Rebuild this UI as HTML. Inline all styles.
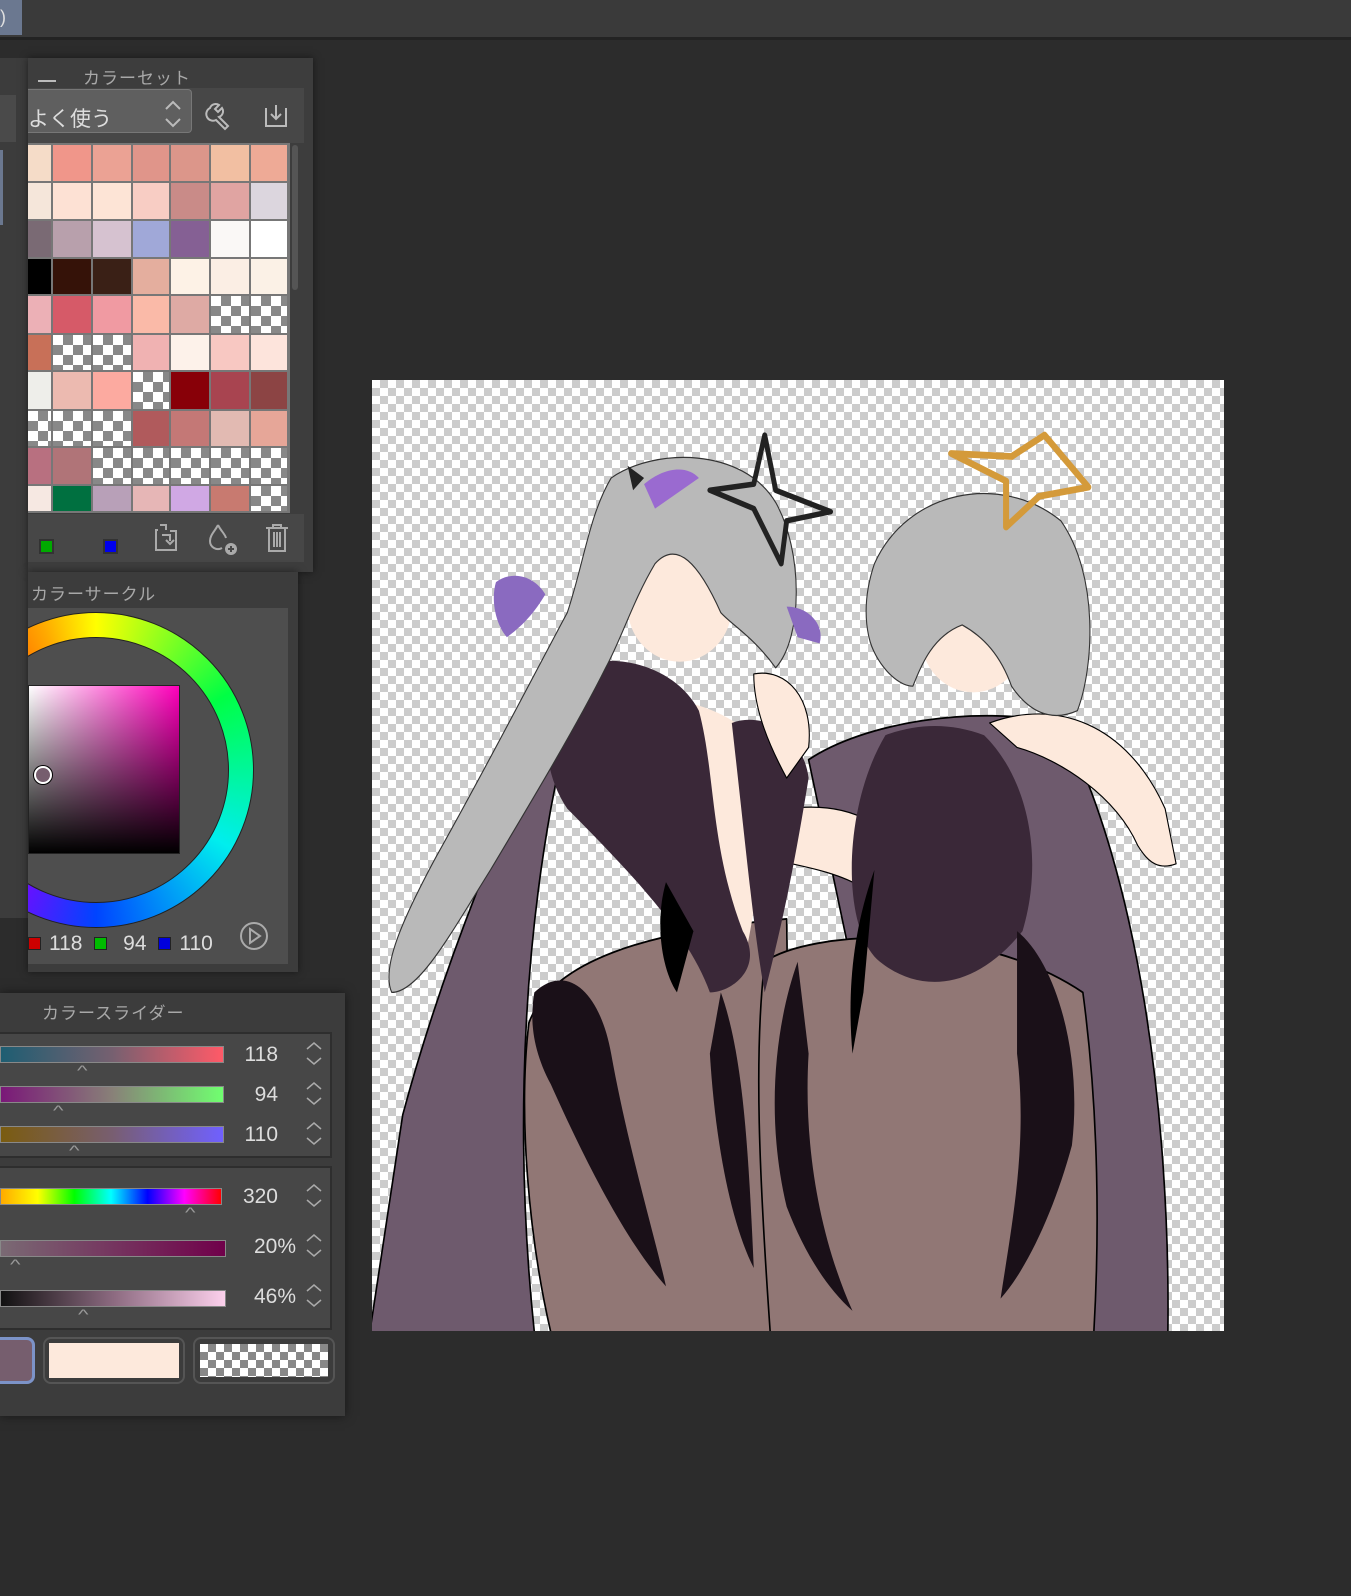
<!DOCTYPE html>
<html><head><meta charset="utf-8"><style>
*{margin:0;padding:0;box-sizing:border-box}
body{width:1351px;height:1596px;background:#2c2c2c;position:relative;overflow:hidden;font-family:"Liberation Sans","Noto Sans CJK JP",sans-serif;color:#cfcfcf}
.a{position:absolute}
.chk{background-color:#fff;background-image:linear-gradient(45deg,#888 25%,transparent 25%,transparent 75%,#888 75%),linear-gradient(45deg,#888 25%,transparent 25%,transparent 75%,#888 75%);background-size:16px 16px;background-position:0 0,8px 8px}
.cv{background-color:#fff;background-image:linear-gradient(45deg,#ccc 25%,transparent 25%,transparent 75%,#ccc 75%),linear-gradient(45deg,#ccc 25%,transparent 25%,transparent 75%,#ccc 75%);background-size:16px 16px;background-position:0 0,8px 8px}
.ttl{font-size:17px;color:#a8a8a8;letter-spacing:1px}
.bar{position:absolute;left:0;width:224px;height:17px;border:1px solid #888}
.num{position:absolute;width:60px;text-align:right;font-size:21px;color:#ddd}
.car{position:absolute;font-size:14px;color:#999;transform:scaleX(1.6)}
</style></head><body>
<div class="a" style="left:0;top:0;width:1351px;height:37px;background:#3a3a3a"></div>
<div class="a" style="left:0;top:0;width:22px;height:35px;background:#6b7890;color:#e0e0e0;font-size:18px;line-height:35px">)</div>
<div class="a" style="left:0;top:37px;width:1351px;height:3px;background:#232323"></div>

<div class="a" style="left:0;top:58px;width:30px;height:860px;background:#3c3c3c"></div>
<div class="a" style="left:0;top:95px;width:16px;height:47px;background:#4a4a4a"></div>
<div class="a" style="left:0;top:150px;width:3px;height:75px;background:#6b7890"></div>

<div class="a" style="left:28px;top:58px;width:285px;height:514px;background:#3d3d3d;box-shadow:0 0 8px rgba(0,0,0,.5)"></div>
<div class="a" style="left:38px;top:80px;width:18px;height:2px;background:#bbb"></div>
<div class="a ttl" style="left:83px;top:64px">カラーセット</div>
<div class="a" style="left:28px;top:88px;width:276px;height:55px;background:#474747"></div>
<div class="a" style="left:28px;top:89px;width:164px;height:44px;background:#5f5f5f;border:1px solid #777;border-left:none;border-radius:0 4px 4px 0"></div>
<div class="a" style="left:28px;top:103px;font-size:21px;color:#ddd">よく使う</div>
<svg class="a" style="left:163px;top:97px" width="20" height="34"><path d="M3 12L10 5L17 12M3 22L10 29L17 22" stroke="#bbb" stroke-width="2" fill="none"/></svg>
<svg class="a" style="left:204px;top:100px" width="32" height="32"><path d="M6 8a6 6 0 0 1 9-3l-4 4 3 3 4-4a6 6 0 0 1-3 9l9 9-3 3-9-9a6 6 0 0 1-6-12z" stroke="#bbb" stroke-width="2" fill="none"/></svg>
<svg class="a" style="left:262px;top:102px" width="28" height="28"><path d="M4 6v18h20V6M14 3v14M9 12l5 5 5-5" stroke="#bbb" stroke-width="2" fill="none"/></svg>
<div class="a" style="left:28px;top:143px;width:262px;height:370px;background:#777"></div>
<div id="grid" class="a" style="left:28px;top:145px;width:262px;height:368px"></div>
<div class="a" style="left:292px;top:145px;width:6px;height:145px;background:#555;border-radius:3px"></div>
<div class="a" style="left:28px;top:514px;width:276px;height:48px;background:#474747"></div>
<div class="a" style="left:39px;top:539px;width:15px;height:15px;background:#0a0;border:2px solid #333"></div>
<div class="a" style="left:103px;top:539px;width:15px;height:15px;background:#00e;border:2px solid #333"></div>
<svg class="a" style="left:152px;top:522px" width="30" height="32"><path d="M8 3h6v5M6 8h-2v20h20V9h-6M10 13l8-0v6M14 18l4 4 4-4" stroke="#aaa" stroke-width="2" fill="none"/></svg>
<svg class="a" style="left:205px;top:522px" width="36" height="36"><path d="M13 3C10 9 5 13 5 19a8 8 0 0 0 12 7M13 3c3 6 7 9 8 13" stroke="#aaa" stroke-width="2" fill="none"/><circle cx="26" cy="27" r="6" fill="#aaa"/><path d="M23 27h6M26 24v6" stroke="#474747" stroke-width="2"/></svg>
<svg class="a" style="left:264px;top:523px" width="26" height="30"><path d="M2 5h22M9 5V2h8v3M5 5v23h16V5M10 9v15M13 9v15M16 9v15" stroke="#aaa" stroke-width="2" fill="none"/></svg>

<div class="a" style="left:28px;top:572px;width:270px;height:400px;background:#3c3c3c;box-shadow:0 0 8px rgba(0,0,0,.5)"></div>
<div class="a ttl" style="left:31px;top:580px">カラーサークル</div>
<div class="a" style="left:28px;top:608px;width:260px;height:356px;background:#4e4e4e;overflow:hidden">
<div class="a" style="left:-90px;top:4px;width:316px;height:316px;border-radius:50%;background:conic-gradient(#ff0 0deg,#0f4 60deg,#0ee 120deg,#04f 180deg,#80f 220deg,#f0a 270deg,#f40 310deg,#fa0 340deg,#ff0 360deg);border:1px solid #222"></div>
<div class="a" style="left:-65px;top:29px;width:266px;height:266px;border-radius:50%;background:#4e4e4e;border:1px solid #222"></div>
<div class="a" style="left:0;top:77px;width:152px;height:169px;background:linear-gradient(to bottom,transparent,#000),linear-gradient(to right,#fff,#f0b);border:1px solid #222"></div>
<div class="a" style="left:6px;top:158px;width:18px;height:18px;border-radius:50%;border:2px solid #fff;background:#765e6e;box-shadow:0 0 0 1px #000"></div>
<div class="a" style="left:0;top:324px;width:260px;font-size:21px;color:#ddd;white-space:nowrap"><span style="display:inline-block;width:13px;height:13px;background:#c00;border:1px solid #222;margin:0 8px 0 0"></span>118 <span style="display:inline-block;width:13px;height:13px;background:#0b0;border:1px solid #222;margin:0 10px 0 6px"></span>&nbsp;94 <span style="display:inline-block;width:13px;height:13px;background:#00d;border:1px solid #222;margin:0 8px 0 6px"></span>110</div>
<svg class="a" style="left:210px;top:312px" width="32" height="32"><circle cx="16" cy="16" r="13" stroke="#aaa" stroke-width="2" fill="none"/><path d="M12 9l10 7-10 7z" stroke="#aaa" stroke-width="2" fill="none"/></svg>
</div>

<div class="a" style="left:0;top:993px;width:345px;height:423px;background:#3c3c3c;box-shadow:0 0 10px rgba(0,0,0,.5)"></div>
<div class="a ttl" style="left:42px;top:999px">カラースライダー</div>
<div class="a" style="left:0;top:1032px;width:332px;height:126px;background:#474747;border:2px solid #2e2e2e;border-left:none"></div>
<div class="a" style="left:0;top:1166px;width:332px;height:164px;background:#474747;border:2px solid #2e2e2e;border-left:none"></div>
<div class="bar" style="top:1046px;background:linear-gradient(90deg,#1e5e72,#766070,#ff5a68)"></div>
<div class="bar" style="top:1086px;background:linear-gradient(90deg,#7a1878,#888078,#70ff70)"></div>
<div class="bar" style="top:1126px;background:linear-gradient(90deg,#7a5c10,#785e70,#7060ff)"></div>
<div class="bar" style="top:1188px;width:222px;background:linear-gradient(90deg,#fa0,#ff0,#0f0,#0ff,#00f,#f0f,#f00)"></div>
<div class="bar" style="top:1240px;width:226px;background:linear-gradient(90deg,#7a6a74,#70004a)"></div>
<div class="bar" style="top:1290px;width:226px;background:linear-gradient(90deg,#111,#8c6a80,#fcd0ec)"></div>
<div class="car" style="left:79px;top:1062px">^</div>
<div class="car" style="left:55px;top:1102px">^</div>
<div class="car" style="left:71px;top:1142px">^</div>
<div class="car" style="left:187px;top:1204px">^</div>
<div class="car" style="left:12px;top:1256px">^</div>
<div class="car" style="left:80px;top:1306px">^</div>
<div class="num" style="left:218px;top:1043px">118</div>
<div class="num" style="left:218px;top:1083px">94</div>
<div class="num" style="left:218px;top:1123px">110</div>
<div class="num" style="left:218px;top:1185px">320</div>
<div class="num" style="left:236px;top:1235px">20%</div>
<div class="num" style="left:236px;top:1285px">46%</div>
<svg class="a" style="left:305px;top:1040px" width="18" height="290"><g stroke="#aaa" stroke-width="1.5" fill="none"><path d="M2 9l7-6 7 6M2 18l7 6 7-6"/><path d="M2 49l7-6 7 6M2 58l7 6 7-6"/><path d="M2 89l7-6 7 6M2 98l7 6 7-6"/><path d="M2 151l7-6 7 6M2 160l7 6 7-6"/><path d="M2 201l7-6 7 6M2 210l7 6 7-6"/><path d="M2 251l7-6 7 6M2 260l7 6 7-6"/></g></svg>
<div class="a" style="left:0;top:1337px;width:35px;height:47px;border:3px solid #7c93c8;border-left:none;border-radius:0 8px 8px 0;background:#765e6e"></div>
<div class="a" style="left:43px;top:1337px;width:142px;height:47px;border:2px solid #555;border-radius:8px;padding:4px"><div style="width:100%;height:100%;background:#fde9dc"></div></div>
<div class="a" style="left:193px;top:1337px;width:142px;height:47px;border:2px solid #555;border-radius:8px;padding:5px"><div class="chk" style="width:100%;height:100%"></div></div>

<div class="a cv" style="left:372px;top:380px;width:852px;height:951px;overflow:hidden">
<svg width="852" height="951" viewBox="0 0 852 951">
<g transform="scale(0.5485 0.6124) translate(-4 0)" stroke-linejoin="round">
<path d="M380 470 C300 600 150 900 60 1200 L0 1555 L300 1555 C270 1300 270 1000 330 700 Z" fill="#6e5a6d" stroke="#000" stroke-width="3"/>
<path d="M800 620 C900 560 1100 530 1260 560 C1400 800 1460 1200 1455 1555 L1020 1555 Z" fill="#6e5a6d" stroke="#000" stroke-width="3"/>
<path d="M290 1050 C330 950 500 900 760 880 L770 1555 L330 1555 C290 1400 270 1200 290 1050Z" fill="#917775" stroke="#000" stroke-width="3"/>
<path d="M720 950 C800 900 1100 880 1300 1000 C1330 1200 1330 1400 1320 1555 L730 1555 C710 1300 700 1100 720 950Z" fill="#917775" stroke="#000" stroke-width="3"/>
<path d="M520 520 C600 520 700 560 730 620 C720 760 700 880 680 960 C640 950 610 900 600 880 C580 760 540 640 520 520Z" fill="#fde9dc"/>
<path d="M980 580 C1050 570 1110 580 1140 620 C1110 760 1080 900 1000 960 C960 880 950 700 980 580Z" fill="#fde9dc"/>
<path d="M700 720 C760 690 850 690 910 720 L900 830 C850 800 760 790 720 780 Z" fill="#fde9dc" stroke="#000" stroke-width="2"/>
<path d="M370 470 C450 440 560 470 600 540 C630 640 620 760 680 900 C720 960 660 1000 620 1000 C580 900 470 800 360 700 C300 620 320 520 370 470Z" fill="#3a2838"/>
<path d="M660 560 C720 540 790 580 800 650 C780 760 760 860 720 1000 C700 900 690 800 660 560Z" fill="#3a2838"/>
<path d="M300 1000 C360 950 420 1000 440 1100 C470 1250 520 1400 540 1480 C460 1400 380 1250 330 1150 C300 1100 290 1050 300 1000Z" fill="#1a1018"/>
<path d="M640 1000 C680 1100 690 1250 700 1450 C660 1380 630 1250 620 1100Z" fill="#1a1018"/>
<path d="M940 580 C1000 560 1060 560 1120 580 C1200 650 1230 780 1190 900 C1100 1000 1000 1000 930 950 C860 900 860 700 940 580Z" fill="#3a2838"/>
<path d="M1180 900 C1250 950 1300 1100 1280 1250 C1250 1350 1200 1450 1150 1500 C1170 1380 1200 1250 1180 1100Z" fill="#1a1018"/>
<path d="M780 950 C740 1050 720 1200 760 1350 C790 1420 830 1480 880 1520 C820 1400 790 1250 800 1100 Z" fill="#1a1018"/>
<path d="M920 800 C880 900 870 1000 880 1100 L900 1000Z" fill="#000"/>
<path d="M540 820 C520 880 530 960 560 1000 L590 900Z" fill="#000"/>
<ellipse cx="565" cy="370" rx="95" ry="90" fill="#fde9dc"/>
<ellipse cx="1100" cy="420" rx="95" ry="90" fill="#fde9dc"/>
<path d="M700 480 C760 470 810 520 800 600 L760 650 C730 600 700 540 700 480Z" fill="#fde9dc" stroke="#000" stroke-width="2"/>
<path d="M1130 560 C1250 520 1380 560 1450 700 L1470 790 C1440 800 1420 790 1400 760 C1360 680 1260 620 1180 600Z" fill="#fde9dc" stroke="#000" stroke-width="2"/>
<path d="M440 160 C520 110 680 110 740 200 C790 280 790 420 740 470 C700 420 660 400 640 380 C600 300 560 260 520 300 C480 360 460 420 430 470 C380 560 300 680 220 800 C150 900 90 1000 40 1000 C20 960 60 880 120 780 C220 620 300 480 360 380 C390 300 400 220 440 160Z" fill="#b9b9b9" stroke="#333" stroke-width="2"/>
<path d="M230 330 C260 310 300 320 320 350 C300 380 280 400 250 420 C230 400 220 360 230 330Z" fill="#8a6ac0"/>
<path d="M760 370 C800 370 830 400 820 430 L780 420Z" fill="#8a6ac0"/>
<path d="M500 170 C540 140 580 140 600 160 L520 210Z" fill="#9a6ad0"/>
<path d="M470 140 L500 160 L480 180 Z" fill="#222"/>
<path d="M720 90 L740 180 L840 215 L760 230 L750 300 L700 210 L620 180 L700 170 Z" fill="none" stroke="#222" stroke-width="9"/>
<path d="M920 300 C980 180 1150 150 1260 230 C1330 320 1320 470 1290 540 C1240 560 1200 540 1170 500 C1150 450 1120 420 1080 400 C1020 420 1000 480 990 500 C960 500 920 460 910 420 C900 380 905 340 920 300Z" fill="#b9b9b9" stroke="#333" stroke-width="2"/>
<path d="M1060 120 L1170 125 L1230 90 L1310 175 L1220 190 L1160 240 L1160 165 Z" fill="none" stroke="#d49a3a" stroke-width="11"/>
</g>
</svg>
</div>
<script>
var rows=[
["#f5dcc8","#f0968a","#eba294","#e0958a","#dc968a","#f2bfa2","#eeaa96"],
["#f5e6da","#fde1d4","#fde4d6","#f8cdc4","#c98b88","#e0a4a2","#dcd6de"],
["#7a6a74","#b8a0ac","#d6c2d0","#a0a8d8","#856094","#faf8f6","#ffffff"],
["#000000","#351208","#3a2016","#e4ae9e","#fdf2e6","#fbeee4","#fbf1e6"],
["#ecb0b6","#d65a68","#f09aa2","#fabaa8","#deaaa4","c","c"],
["#c87058","c","c","#f0b2b2","#fdf2ea","#f8c8c2","#fde4dc"],
["#eeeeea","#ecbab0","#fcaaa0","c","#880008","#a84450","#8c4444"],
["c","c","c","#b05a5c","#c47876","#e2bab2","#e6a698"],
["#b87080","#b07478","c","c","c","c","c"],
["#f6e8e2","#007040","#b8a0b8","#e6b6b6","#d0a8e4","#c87a70","c"]];
var xs=[0,25,65,105,143,183,223,261],ys=[0,38,76,114,151,190,227,266,303,341,368];
var g=document.getElementById('grid'),h='';
for(var r=0;r<10;r++)for(var c=0;c<7;c++){var v=rows[r][c];h+='<div class="a'+(v=='c'?' chk':'')+'" style="left:'+xs[c]+'px;top:'+ys[r]+'px;width:'+(xs[c+1]-xs[c]-2)+'px;height:'+(ys[r+1]-ys[r]-2)+'px;'+(v=='c'?'background-size:20px 20px;background-position:0 0,10px 10px':'background:'+v)+'"></div>';}
g.innerHTML=h;
</script>
</body></html>
